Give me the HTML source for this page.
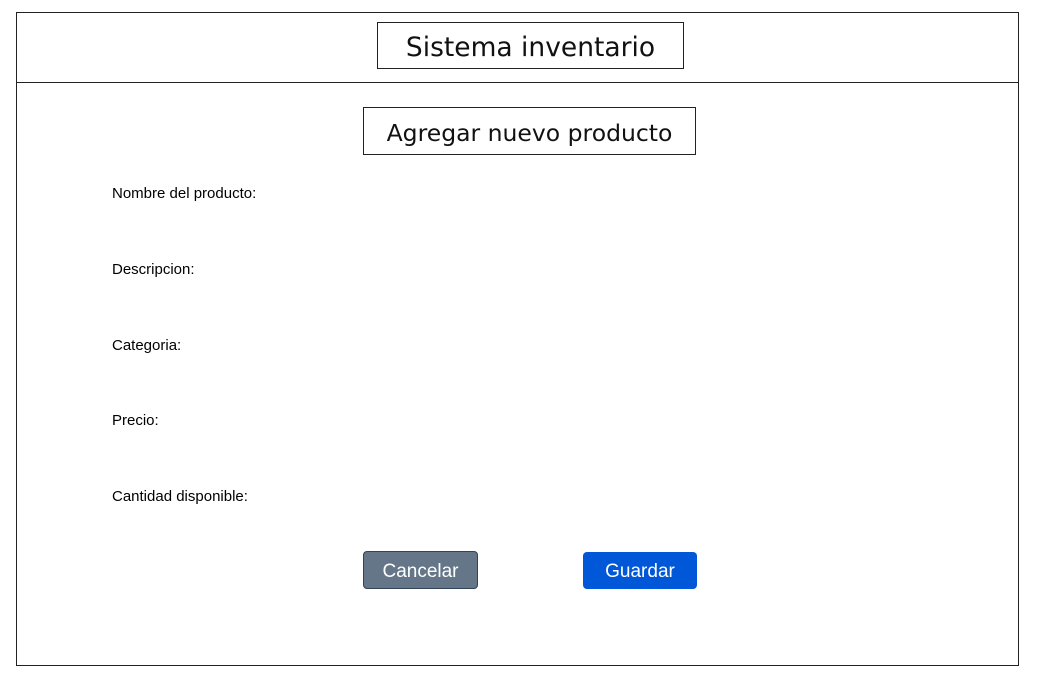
<!DOCTYPE html>
<html><head><meta charset="utf-8"><style>
body{margin:0;width:1037px;height:677px;background:#fff;position:relative;font-family:"Liberation Sans",sans-serif;overflow:hidden}
.a{position:absolute;box-sizing:border-box}
.box{border:1.3px solid #222}
.t{display:flex;align-items:center;justify-content:center;color:#111;font-family:"DejaVu Sans",sans-serif;padding-top:3px}
.l{position:absolute;left:112px;font-size:15px;color:#000}
.btn{border-radius:4px;color:#fff;font-size:19px;display:flex;align-items:center;justify-content:center;padding-top:3px}
</style></head><body>
<div class="a box" style="left:16px;top:12px;width:1003px;height:654px"></div>
<div class="a" style="left:16px;top:82px;width:1003px;border-top:1.3px solid #222"></div>
<div class="a box t" style="left:377px;top:22px;width:307px;height:47px;font-size:26.5px">Sistema inventario</div>
<div class="a box t" style="left:363px;top:107px;width:333px;height:48px;font-size:23.5px">Agregar nuevo producto</div>
<div class="l" style="top:185px">Nombre del producto:</div>
<div class="l" style="top:261px">Descripcion:</div>
<div class="l" style="top:337px">Categoria:</div>
<div class="l" style="top:412px">Precio:</div>
<div class="l" style="top:488px">Cantidad disponible:</div>
<div class="a btn" style="left:363px;top:551px;width:115px;height:38px;background:#647687;border:1px solid #314354">Cancelar</div>
<div class="a btn" style="left:583px;top:552px;width:114px;height:37px;background:#0057D8">Guardar</div>
</body></html>
